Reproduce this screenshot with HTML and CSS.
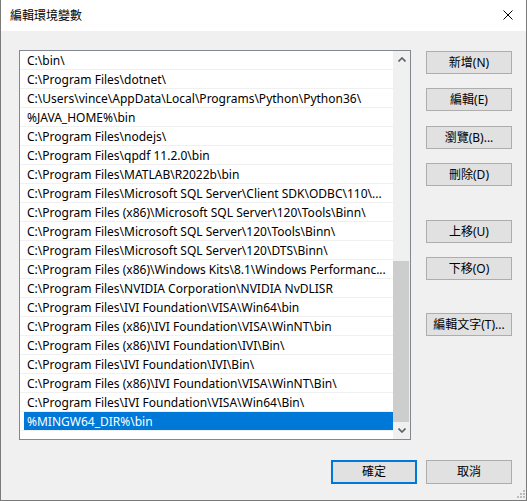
FILE: index.html
```html
<!DOCTYPE html>
<html lang="zh-Hant">
<head>
<meta charset="utf-8">
<title>編輯環境變數</title>
<link rel="stylesheet" href="styles.css">
</head>
<body>
<div class="window">
  <div class="titlebar">
    <span class="title">編輯環境變數</span>
    <svg class="close" width="10" height="10" viewBox="0 0 10 10"><path d="M0.5 0.5 L9.5 9.5 M9.5 0.5 L0.5 9.5" stroke="#000" stroke-width="1" fill="none"/></svg>
  </div>
  <div class="main">
    <div class="list">
      <div class="rows">
        <div class="row">C:\bin\</div>
        <div class="row">C:\Program Files\dotnet\</div>
        <div class="row">C:\Users\vince\AppData\Local\Programs\Python\Python36\</div>
        <div class="row">%JAVA_HOME%\bin</div>
        <div class="row">C:\Program Files\nodejs\</div>
        <div class="row">C:\Program Files\qpdf 11.2.0\bin</div>
        <div class="row">C:\Program Files\MATLAB\R2022b\bin</div>
        <div class="row">C:\Program Files\Microsoft SQL Server\Client SDK\ODBC\110\...</div>
        <div class="row">C:\Program Files (x86)\Microsoft SQL Server\120\Tools\Binn\</div>
        <div class="row">C:\Program Files\Microsoft SQL Server\120\Tools\Binn\</div>
        <div class="row">C:\Program Files\Microsoft SQL Server\120\DTS\Binn\</div>
        <div class="row">C:\Program Files (x86)\Windows Kits\8.1\Windows Performanc...</div>
        <div class="row">C:\Program Files\NVIDIA Corporation\NVIDIA NvDLISR</div>
        <div class="row">C:\Program Files\IVI Foundation\VISA\Win64\bin</div>
        <div class="row">C:\Program Files (x86)\IVI Foundation\VISA\WinNT\bin</div>
        <div class="row">C:\Program Files (x86)\IVI Foundation\IVI\Bin\</div>
        <div class="row">C:\Program Files\IVI Foundation\IVI\Bin\</div>
        <div class="row">C:\Program Files (x86)\IVI Foundation\VISA\WinNT\Bin\</div>
        <div class="row">C:\Program Files\IVI Foundation\VISA\Win64\Bin\</div>
        <div class="row selected"><span class="sel">%MINGW64_DIR%\bin</span></div>
      </div>
      <div class="scrollbar">
        <div class="arrow">
          <svg width="8" height="5" viewBox="0 0 8 5"><path d="M0.5 4.5 L4 1 L7.5 4.5" stroke="#606060" stroke-width="1.6" fill="none"/></svg>
        </div>
        <div class="track"><div class="thumb"></div></div>
        <div class="arrow">
          <svg width="8" height="5" viewBox="0 0 8 5"><path d="M0.5 0.5 L4 4 L7.5 0.5" stroke="#606060" stroke-width="1.6" fill="none"/></svg>
        </div>
      </div>
    </div>
    <div class="side">
      <button class="btn b-new">新增(N)</button>
      <button class="btn b-edit">編輯(E)</button>
      <button class="btn b-browse">瀏覽(B)...</button>
      <button class="btn b-del">刪除(D)</button>
      <button class="btn b-up">上移(U)</button>
      <button class="btn b-down">下移(O)</button>
      <button class="btn b-text">編輯文字(T)...</button>
    </div>
  </div>
  <div class="footer">
    <button class="btn big default">確定</button>
    <button class="btn big">取消</button>
  </div>
  <svg class="grip" width="8" height="8" viewBox="0 0 8 8">
    <rect x="6" y="0" width="2" height="2" fill="#bcbcbc"/>
    <rect x="3" y="3" width="2" height="2" fill="#bcbcbc"/>
    <rect x="6" y="3" width="2" height="2" fill="#bcbcbc"/>
    <rect x="0" y="6" width="2" height="2" fill="#bcbcbc"/>
    <rect x="3" y="6" width="2" height="2" fill="#bcbcbc"/>
    <rect x="6" y="6" width="2" height="2" fill="#bcbcbc"/>
  </svg>
</div>
</body>
</html>
```
FILE: styles.css
```css
* { box-sizing: border-box; }
html, body { margin: 0; padding: 0; }
body {
  background: #f0f0f0;
  font-family: "Noto Sans", "Noto Sans CJK TC", sans-serif;
  font-size: 12px;
  color: #000;
}
.window {
  position: relative;
  width: 527px;
  height: 501px;
  background: #f0f0f0;
  border-left: 1px solid #7a7a7a;
  border-right: 1px solid #7a7a7a;
  border-bottom: 1px solid #7a7a7a;
  display: flex;
  flex-direction: column;
}
.titlebar {
  height: 31px;
  background: #fff;
  display: flex;
  align-items: center;
  justify-content: space-between;
  padding: 0 13px 0 9px;
}
.title {
  font-family: "Noto Sans CJK TC", sans-serif;
  font-size: 12px;
  color: #000;
  line-height: 16px;
  margin-top: -2px;
}
.close { display: block; margin-top: -1px; }
.main {
  display: flex;
  gap: 15px;
  padding: 19px 14px 0 18px;
}
.list {
  width: 392px;
  height: 390px;
  border: 1px solid #828790;
  background: #fff;
  display: flex;
}
.rows {
  flex: 1;
}
.row {
  height: 19px;
  line-height: 20px;
  border-bottom: 1px solid #f0f0f0;
  padding-left: 7px;
  white-space: nowrap;
  overflow: hidden;
}
.row.selected {
  padding-left: 4px;
}
.sel {
  display: block;
  height: 18px;
  background: #0078d7;
  color: #fff;
  padding-left: 3px;
}
.scrollbar {
  width: 17px;
  background: #f0f0f0;
  display: flex;
  flex-direction: column;
}
.arrow {
  height: 17px;
  display: flex;
  align-items: center;
  justify-content: center;
}
.arrow svg { display: block; }
.track {
  flex: 1;
  padding-top: 193px;
  padding-right: 1px;
}
.thumb {
  height: 161px;
  background: #cdcdcd;
}
.side {
  width: 86px;
  display: flex;
  flex-direction: column;
  padding-top: 1px;
}
.btn {
  font-family: "Noto Sans", "Noto Sans CJK TC", sans-serif;
  font-size: 12px;
  color: #000;
  height: 23px;
  width: 86px;
  padding: 0;
  background: #e1e1e1;
  border: 1px solid #adadad;
  line-height: 20px;
}
.b-edit { margin-top: 14px; }
.b-browse { margin-top: 15px; }
.b-del { margin-top: 14px; }
.b-up { margin-top: 34px; }
.b-down { margin-top: 14px; }
.b-text { margin-top: 33px; }
.footer {
  display: flex;
  justify-content: flex-end;
  gap: 9px;
  padding: 20px 14px 0 0;
}
.big { height: 24px; }
.default { border: 2px solid #0078d7; }
.grip {
  position: absolute;
  right: 1px;
  bottom: 2px;
}
```
